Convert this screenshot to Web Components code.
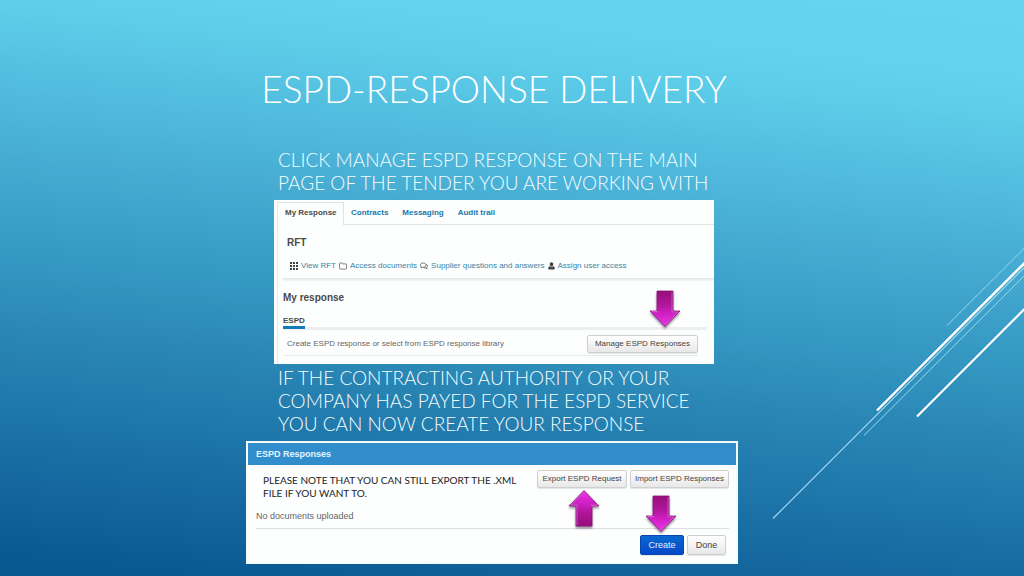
<!DOCTYPE html>
<html lang="en">
<head>
<meta charset="utf-8">
<meta name="viewport" content="width=device-width, initial-scale=1">
<title>ESPD-Response delivery</title>
<style>
  html, body { margin: 0; min-height: 100%; }
  body { font-family: "Liberation Sans", Arial, sans-serif; }
</style>
</head>
<body>
<espd-slide>
  <span slot="title">ESPD-RESPONSE DELIVERY</span>
  <slide-note>CLICK MANAGE ESPD RESPONSE ON THE MAIN<br>PAGE OF THE TENDER YOU ARE WORKING WITH</slide-note>
  <tender-panel></tender-panel>
  <slide-note>IF THE CONTRACTING AUTHORITY OR YOUR<br>COMPANY HAS PAYED FOR THE ESPD SERVICE<br>YOU CAN NOW CREATE YOUR RESPONSE</slide-note>
  <responses-dialog></responses-dialog>
</espd-slide>

<script>
class BaseElement extends HTMLElement {
  constructor() {
    super();
    this.attachShadow({ mode: "open" }).innerHTML = this.constructor.markup;
  }
}

class EspdSlide extends BaseElement {
  static markup = `
    <style>
      :host {
        display: block; position: relative; overflow: hidden; min-height: 100vh; box-sizing: border-box;
        padding: 65px 36px 12px 0;
        background: linear-gradient(186deg, #64d5ef 0%, #62d3ee 11%, #5dcde9 17%, #4db6da 32%, #42a5cd 43%,
          #3598c3 53%, #2a87b5 64%, #1f77aa 75%, #14689f 86%, #085a93 96%, #07588f 100%);
      }
      h1 {
        margin: 0 0 35px; text-align: center; color: #fff;
        font: 300 37px/48px "Century Gothic", Lato, sans-serif;
      }
      main {
        position: relative; display: flex; flex-direction: column; align-items: center;
      }
      slide-lines { position: absolute; right: 0; bottom: 0; }
    </style>
    <slide-lines></slide-lines>
    <main>
      <h1><slot name="title"></slot></h1>
      <slot></slot>
    </main>`;
}

class SlideLines extends BaseElement {
  static markup = `
    <style>
      :host { display: block; width: 264px; height: 336px; }
      svg { display: block; }
    </style>
    <svg width="264" height="336" viewBox="760 240 264 336" fill="none" aria-hidden="true">
      <path d="M947 325.5 1025 247.500" stroke="#8fdcf0" stroke-width="1"/>
      <path d="M877 410.500 1026 261.500" stroke="#fff" stroke-width="2.400"/>
      <path d="M773 518.500 1026 265.700" stroke="#a4dcf8" stroke-width="1.100"/>
      <path d="M864 435.500 1026 274" stroke="#98daf2" stroke-width="1"/>
      <path d="M917 416.500 1026 307.500" stroke="#fff" stroke-width="2.200"/>
    </svg>`;
}

class SlideNote extends BaseElement {
  static markup = `
    <style>
      :host {
        display: block; box-sizing: border-box; width: 100%; max-width: 440px; padding: 0 4px;
        color: #f4fdff; white-space: nowrap;
        font: 300 19px/23px "Century Gothic", Lato, sans-serif;
      }
    </style>
    <slot></slot>`;
}

class PushButton extends BaseElement {
  static markup = `
    <style>
      :host { display: block; }
      button {
        display: block; box-sizing: border-box; width: 100%; height: var(--button-height, 18px);
        margin: 0; padding: 0; border: 1px solid #cfcfcf; border-radius: 2px;
        background: linear-gradient(#fff, #e8e8e8); color: #444;
        font: var(--button-size, 8px)/12px "Liberation Sans", Arial, sans-serif;
        box-shadow: 0 1px 1px rgba(0,0,0,.1); white-space: nowrap;
      }
      :host([primary]) button {
        background: linear-gradient(#0a68d0, #0448c8); border-color: #0648b0; color: #e8f2ff;
      }
    </style>
    <button type="button"><slot></slot></button>`;
}

class PointerArrow extends BaseElement {
  static markup = `
    <style>
      :host { display: block; position: absolute; width: 40px; height: 46px; }
      :host([up]) .shape { transform: rotate(180deg); transform-origin: 20px 21px; }
      svg { display: block; filter: drop-shadow(0 2px 1px rgba(30,0,40,.45)); }
    </style>
    <svg width="40" height="46" viewBox="0 0 40 46" aria-hidden="true">
      <defs>
        <linearGradient id="fill" x1="0" y1="0" x2="0" y2="1">
          <stop offset="0" stop-color="#960f7c"/>
          <stop offset=".35" stop-color="#ad1596"/>
          <stop offset=".7" stop-color="#d622cc"/>
          <stop offset="1" stop-color="#e63be4"/>
        </linearGradient>
      </defs>
      <g class="shape">
        <path d="M12 3H28V23H35L20 38.500 5 23H12Z" fill="url(#fill)" stroke="#851577" stroke-width=".8" stroke-linejoin="round"/>
        <path d="M27 4V24H33L20 37.300" fill="none" stroke="#c768c6" stroke-width=".8"/>
        <path d="M6.500 23.700H13" stroke="#ef78ea" stroke-width=".8"/>
      </g>
    </svg>`;
}

class TenderPanel extends BaseElement {
  static markup = `
    <style>
      :host {
        display: block; position: relative; box-sizing: border-box; width: 100%; max-width: 440px;
        margin: 6px 0 2px; padding: 2px 0 0 3px; background: #fdfefe; color: #4a4a4a;
        font: 8px/12px "Liberation Sans", Arial, sans-serif;
      }
      .frame { border-left: 1px solid #e6e9ea; padding-bottom: 8px; }
      nav { display: flex; height: 23px; font-weight: bold; line-height: 22px; }
      nav a { box-sizing: border-box; padding: 0 7px; text-decoration: none; color: #1a78ab; border-bottom: 1px solid #dfe3e4; }
      nav a[aria-current] {
        width: 66px; color: #4a4a4a; padding: 0 0 0 7px;
        border: 1px solid #dfe3e4; border-width: 1px 1px 0 0; line-height: 20px;
      }
      nav::after { content: ""; flex: 1; border-bottom: 1px solid #dfe3e4; }
      h2, h3 { margin: 0; font: bold 10px/14px "Liberation Sans", Arial, sans-serif; }
      h2 { padding: 11px 0 0 9px; }
      .links { display: flex; align-items: center; gap: 3px; padding: 10px 0 6px 12px; }
      .links a { color: #3a84a4; text-decoration: none; white-space: nowrap; }
      .links svg { flex: none; display: block; }
      .rule { height: 3px; margin-left: 5px; background: linear-gradient(#e2e4e5, #f6f7f7); }
      h3 { padding: 10px 0 0 5px; }
      h4 { margin: 10px 7px 0 5px; font: bold 8px/12px "Liberation Sans", Arial, sans-serif; border-bottom: 3px solid #eceeef; }
      h4 span { display: inline-block; margin-bottom: -3px; border-bottom: 3px solid #157ab8; line-height: 11px; }
      .row {
        display: flex; align-items: center; justify-content: space-between; color: #666;
        margin: 0 16px 0 6px; padding: 5px 0 2px 3px; border-bottom: 1px solid #e8ebec;
      }
      .row push-button { width: 111px; }
      pointer-arrow { right: 29px; top: 88px; }
    </style>
    <div class="frame">
      <nav>
        <a href="#response" aria-current="page">My Response</a>
        <a href="#contracts">Contracts</a>
        <a href="#messaging">Messaging</a>
        <a href="#audit">Audit trail</a>
      </nav>
      <h2>RFT</h2>
      <div class="links">
        <svg width="8" height="8" viewBox="0 0 8 8" fill="#444"><path d="M0 0h2v2H0zM3 0h2v2H3zM6 0h2v2H6zM0 3h2v2H0zM3 3h2v2H3zM6 3h2v2H6zM0 6h2v2H0zM3 6h2v2H3zM6 6h2v2H6z"/></svg>
        <a href="#rft">View RFT</a>
        <svg width="8" height="8" viewBox="0 0 8 8" fill="none" stroke="#666" stroke-width=".8"><path d="M.5 1.500q0-.6.6-.6H3l.7 1h3.200q.6 0 .6.600v4q0 .6-.6.600H1.100q-.6 0-.6-.6Z"/></svg>
        <a href="#documents">Access documents</a>
        <svg width="8" height="8" viewBox="0 0 8 8" fill="none" stroke="#555" stroke-width=".8"><path d="M3.200 1C1.500 1 .4 2 .4 3.100c0 .7.400 1.300 1 1.700L1 5.900l1.500-.7c2 .3 3.500-.8 3.500-2.100S4.800 1 3.200 1Z"/><path d="M6.300 2.300c.8.400 1.200 1 1.200 1.700 0 .6-.3 1.100-.9 1.500l.5 1.200-1.500-.7c-.8.100-1.500 0-2.100-.4"/></svg>
        <a href="#questions">Supplier questions and answers</a>
        <svg width="7" height="8" viewBox="0 0 7 8" fill="#444"><path d="M3.500.3c1.100 0 1.800.8 1.800 2S4.600 4.600 3.500 4.600 1.700 3.500 1.700 2.300 2.400.3 3.500.3ZM1.800 4.200C.6 4.400.2 5.400.2 6.600c0 .7.400 1 1 1h4.600c.6 0 1-.3 1-1 0-1.200-.4-2.200-1.600-2.400-.9 1-2.500 1-3.400 0Z"/></svg>
        <a href="#access">Assign user access</a>
      </div>
      <div class="rule"></div>
      <h3>My response</h3>
      <h4><span>ESPD</span></h4>
      <div class="row">
        <span>Create ESPD response or select from ESPD response library</span>
        <push-button>Manage ESPD Responses</push-button>
      </div>
    </div>
    <pointer-arrow></pointer-arrow>`;
}

class ResponsesDialog extends BaseElement {
  static markup = `
    <style>
      :host {
        display: block; position: relative; box-sizing: border-box; width: 100%; max-width: 492px;
        margin: 6px 4px 0 0; border: 2px solid #f4fbfd; background: #fdfefe; color: #666;
        font: 9px/12px "Liberation Sans", Arial, sans-serif;
      }
      h2 {
        margin: 0; padding-left: 8px; color: #e6f6ff; background: #318dcc;
        font: bold 9px/22px "Liberation Sans", Arial, sans-serif;
      }
      .top { display: flex; justify-content: space-between; align-items: flex-start; padding: 5px 7px 0 15px; }
      .top p { margin: 4px 0 0; color: #1c1c1c; font: 10px/13px "Century Gothic", Lato, sans-serif; white-space: nowrap; }
      .buttons { display: flex; gap: 3px; }
      .export { width: 90px; }
      .import { width: 99px; }
      .empty { margin: 0 7px 0 8px; padding: 10px 0 6px; border-bottom: 1px solid #dcdfe0; }
      .actions { display: flex; justify-content: flex-end; gap: 3px; padding: 6px 10px 7px; --button-size: 9px; --button-height: 20px; }
      .create { width: 44px; }
      .done { width: 39px; }
      .up { right: 132px; top: 44px; }
      .down { right: 55px; top: 50px; }
    </style>
    <h2>ESPD Responses</h2>
    <div class="top">
      <p>PLEASE NOTE THAT YOU CAN STILL EXPORT THE .XML<br>FILE IF YOU WANT TO.</p>
      <div class="buttons">
        <push-button class="export">Export ESPD Request</push-button>
        <push-button class="import">Import ESPD Responses</push-button>
      </div>
    </div>
    <p class="empty">No documents uploaded</p>
    <div class="actions">
      <push-button class="create" primary>Create</push-button>
      <push-button class="done">Done</push-button>
    </div>
    <pointer-arrow class="up" up></pointer-arrow>
    <pointer-arrow class="down"></pointer-arrow>`;
}

customElements.define("push-button", PushButton);
customElements.define("pointer-arrow", PointerArrow);
customElements.define("slide-lines", SlideLines);
customElements.define("slide-note", SlideNote);
customElements.define("tender-panel", TenderPanel);
customElements.define("responses-dialog", ResponsesDialog);
customElements.define("espd-slide", EspdSlide);
</script>
</body>
</html>
